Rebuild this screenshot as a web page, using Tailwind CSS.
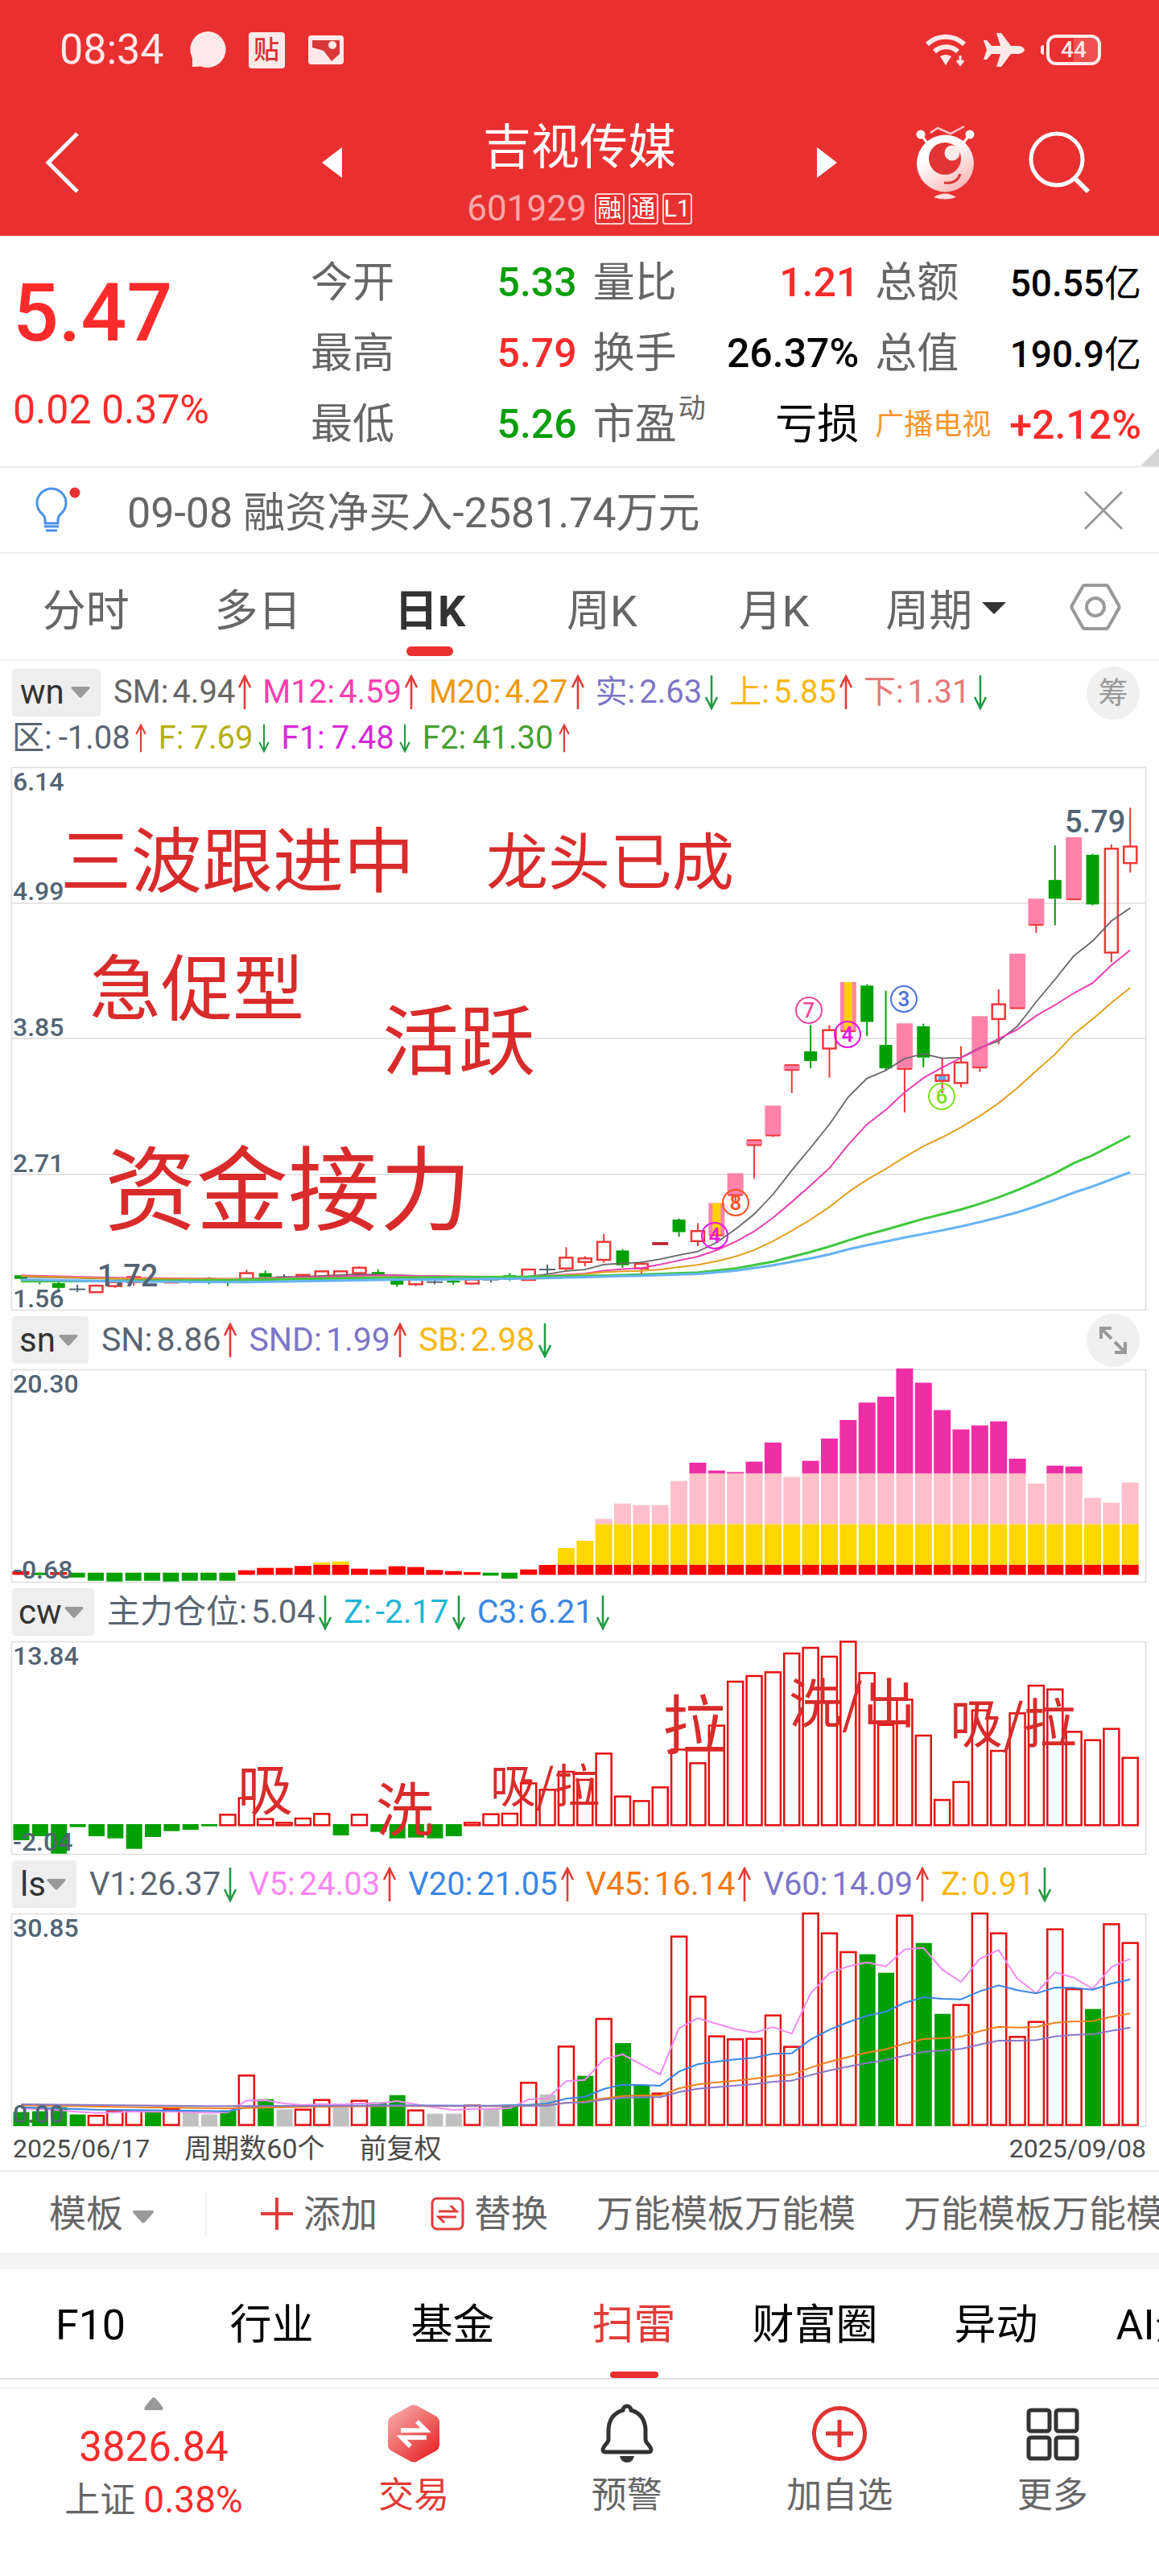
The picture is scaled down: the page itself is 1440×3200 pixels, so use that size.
<!DOCTYPE html>
<html lang="zh-CN">
  <head>
    <meta charset="UTF-8" />
    <meta name="viewport" content="width=device-width, initial-scale=1.0" />
    <title>吉视传媒 601929</title>
    <script src="https://cdn.jsdelivr.net/npm/@tailwindcss/browser@4"></script>
  </head>
  <body
    class="min-h-screen overflow-x-hidden bg-white font-['Roboto','Noto_Sans_CJK_SC',sans-serif] leading-none text-[#666]"
  >
    <!-- shared symbols -->
    <svg class="hidden">
      <symbol id="up" viewBox="0 0 18 44">
        <path d="M9 43V3M2 16L9 2l7 14" fill="none" stroke="#e23b38" stroke-width="2.6" />
      </symbol>
      <symbol id="down" viewBox="0 0 18 44">
        <path d="M9 1v40M2 28l7 14 7-14" fill="none" stroke="#239a45" stroke-width="2.6" />
      </symbol>
      <symbol id="caret" viewBox="0 0 28 18">
        <path d="M3 1h22q3 0 1.500 3L16 15.500q-2 2-4 0L1.500 4Q0 1 3 1z" fill="#999" />
      </symbol>
    </svg>

    <header class="bg-[#e93030] text-white">
      <div class="flex h-[124px] items-center justify-between pr-[72px] pl-[74px] text-[#fee9e9]">
        <div class="flex items-center">
          <span class="text-[52px]">08:34</span>
          <svg class="ml-8 h-[48px] w-[46px]" viewBox="0 0 46 48">
            <path d="M23 1a22.500 22.500 0 1 1-9 43.500L3 45V34A22.500 22.500 0 0 1 23 1z" fill="currentColor" />
          </svg>
          <span
            class="ml-[27px] flex h-[45px] w-[45px] items-center justify-center rounded-sm bg-[#fee9e9] text-[32px] font-medium text-[#d93030]"
            >贴</span
          >
          <svg class="ml-7 h-[36px] w-[46px]" viewBox="0 0 46 36">
            <rect x="1" width="44" height="36" rx="4" fill="currentColor" />
            <path d="M6 6h34v17L30 32 20 19 6 15z" fill="#d93838" />
            <circle cx="31" cy="12" r="5" fill="currentColor" />
          </svg>
        </div>
        <div class="flex items-center gap-5">
          <svg class="h-[42px] w-[52px]" viewBox="0 0 52 42" fill="none" stroke="currentColor" stroke-width="6">
            <path d="M3 14a33 33 0 0 1 46 0M12 23a21 21 0 0 1 29 0" />
            <path d="M19 29q7-4 14 0l-7 11z" fill="currentColor" stroke="none" />
            <path d="M44 28v11M40 34l4 5 4-5" stroke-width="3" />
          </svg>
          <svg class="h-[44px] w-[52px]" viewBox="0 0 52 44">
            <path
              d="M17 1h6l12 16h10q6 1 7 5-1 4-7 5H35L23 43h-6l5-16H11l-6 7H1l4-12L1 10h4l6 7h11z"
              fill="currentColor"
            />
          </svg>
          <span class="flex items-center gap-[3px]">
            <span class="h-3 w-1 rounded-l bg-[#fee9e9]"></span>
            <span
              class="flex h-[38px] w-[68px] items-center justify-center rounded-xl border-4 border-[#fee9e9] bg-linear-to-r from-[#e93030] from-50% to-[#f05050] to-50% text-[28px] font-medium"
              >44</span
            >
          </span>
        </div>
      </div>

      <div class="grid h-[169px] grid-cols-[1fr_auto_1fr]">
        <button class="ml-[54px] flex pt-[39px]" aria-label="返回">
          <svg class="h-[78px] w-[46px]" viewBox="0 0 46 78">
            <path d="M42 3L6 39l36 36" fill="none" stroke="#fff" stroke-width="5" />
          </svg>
        </button>
        <div class="flex w-[640px] justify-between">
          <button class="flex pt-[59px]" aria-label="上一只">
            <svg class="h-[38px] w-[26px]" viewBox="0 0 26 38"><path d="M25 0v38L0 19z" fill="#fff" /></svg>
          </button>
          <div class="flex flex-col items-center pt-[30px]">
            <h1 class="text-[60px]">吉视传媒</h1>
            <div class="mt-[23px] flex items-center gap-[5px] text-[30px]">
              <span class="mr-[5px] text-[44px] text-[#f7a8a8]">601929</span>
              <span class="flex h-[39px] w-[37px] items-center justify-center rounded border-2 border-[#fbd0d0]">融</span>
              <span class="flex h-[39px] w-[37px] items-center justify-center rounded border-2 border-[#fbd0d0]">通</span>
              <span class="flex h-[39px] w-[37px] items-center justify-center rounded border-2 border-[#fbd0d0]">L1</span>
            </div>
          </div>
          <button class="flex pt-[59px]" aria-label="下一只">
            <svg class="h-[38px] w-[26px]" viewBox="0 0 26 38"><path d="M1 0v38l25-19z" fill="#fff" /></svg>
          </button>
        </div>
        <div class="flex justify-end gap-14 pt-[28px] pr-[84px]">
          <button aria-label="助手" class="flex">
            <svg class="h-[100px] w-[90px]" viewBox="0 0 90 100">
              <defs>
                <linearGradient id="bot" x1="0" y1="0" x2=".6" y2="1">
                  <stop offset=".4" stop-color="#fff" />
                  <stop offset="1" stop-color="#fdbcbc" />
                </linearGradient>
              </defs>
              <path d="M15 16l8 11M74 16l-8 11" stroke="#fff" stroke-width="3" />
              <circle cx="14" cy="15" r="5.500" fill="#fff" />
              <circle cx="75" cy="15" r="5.500" fill="#fff" />
              <path d="M26 13l9-6 16 7 17-9" fill="none" stroke="#fbc4c4" stroke-width="2.500" />
              <circle cx="44.500" cy="51" r="35.500" fill="url(#bot)" />
              <circle cx="44" cy="45" r="20" fill="#e23434" />
              <circle cx="53" cy="38" r="9.500" fill="#fdeaea" />
              <path d="M63 64q-4 13-20 11" fill="none" stroke="#d93838" stroke-width="3" />
              <path d="M30 93q14-9 28 0-14 5-28 0z" fill="#fdd" />
            </svg>
          </button>
          <button aria-label="搜索" class="flex pt-[10px]">
            <svg class="h-[80px] w-[80px]" viewBox="0 0 80 80" fill="none" stroke="#fff" stroke-width="5">
              <circle cx="37" cy="36" r="32" />
              <path d="M59 59l17 17" stroke-width="6" />
            </svg>
          </button>
        </div>
      </div>
    </header>

    <section class="relative flex h-[288px] border-b-2 border-[#eee] pr-[22px]">
      <div class="w-[386px] shrink-0 pl-[16px] text-[#fb2b2b]">
        <p class="pt-[46px] text-[100px] font-medium">5.47</p>
        <p class="mt-[45px] text-[50px]">0.02 0.37%</p>
      </div>
      <div class="flex flex-1 gap-5 pt-[33px] text-[52px]">
        <dl class="flex-1 space-y-9">
          <div class="flex justify-between">
            <dt>今开</dt>
            <dd class="text-[50px] font-medium text-[#0a9e0a]">5.33</dd>
          </div>
          <div class="flex justify-between">
            <dt>最高</dt>
            <dd class="text-[50px] font-medium text-[#fb2b2b]">5.79</dd>
          </div>
          <div class="flex justify-between">
            <dt>最低</dt>
            <dd class="text-[50px] font-medium text-[#0a9e0a]">5.26</dd>
          </div>
        </dl>
        <dl class="flex-1 space-y-9">
          <div class="flex justify-between">
            <dt>量比</dt>
            <dd class="text-[50px] font-medium text-[#fb2b2b]">1.21</dd>
          </div>
          <div class="flex justify-between">
            <dt>换手</dt>
            <dd class="text-[50px] font-medium text-black">26.37%</dd>
          </div>
          <div class="flex justify-between">
            <dt class="flex items-start">市盈<span class="-mt-3 ml-0.5 text-[34px]">动</span></dt>
            <dd class="text-black">亏损</dd>
          </div>
        </dl>
        <dl class="flex-1 space-y-9">
          <div class="flex items-center justify-between">
            <dt>总额</dt>
            <dd class="text-[46px] font-medium text-black">50.55<span class="font-normal">亿</span></dd>
          </div>
          <div class="flex items-center justify-between">
            <dt>总值</dt>
            <dd class="text-[46px] font-medium text-black">190.9<span class="font-normal">亿</span></dd>
          </div>
          <div class="flex h-[52px] items-center justify-between">
            <dt class="text-[36px] text-[#f8952a]">广播电视</dt>
            <dd class="text-[50px] font-medium text-[#fb2b2b]">+2.12%</dd>
          </div>
        </dl>
      </div>
      <svg class="absolute right-0 bottom-0 h-[23px] w-[23px]" viewBox="0 0 23 23">
        <path d="M23 0v23H0z" fill="#d5d5d5" />
      </svg>
    </section>

    <section class="flex h-[107px] items-center border-b-2 border-[#eee] pr-[44px] pl-[42px]">
      <svg class="h-[60px] w-[62px]" viewBox="0 0 62 60">
        <path
          d="M14 42q0-4-3-7-7-6-7-14a18 18 0 0 1 36 0q0 8-7 14-3 3-3 7v4H14z"
          fill="none"
          stroke="#4a90ea"
          stroke-width="3"
        />
        <path d="M13 50h18M15 55h14" stroke="#4a90ea" stroke-width="3" />
        <circle cx="51" cy="8" r="6.500" fill="#e83030" />
      </svg>
      <p class="ml-[54px] flex-1 pt-2 text-[52px]">09-08 融资净买入-2581.74万元</p>
      <button aria-label="关闭">
        <svg class="h-[50px] w-[50px]" viewBox="0 0 50 50">
          <path d="M2 2l46 46M48 2L2 48" stroke="#999" stroke-width="3" />
        </svg>
      </button>
    </section>

    <nav class="flex h-[133px] border-b-2 border-[#eee] text-[54px]">
      <button class="flex-1 pt-3">分时</button>
      <button class="flex-1 pt-3">多日</button>
      <button class="relative flex-1 pt-3 font-bold text-[#333]">
        日K<span class="absolute bottom-1 left-1/2 h-3 w-[58px] -translate-x-1/2 rounded-full bg-[#e83030]"></span>
      </button>
      <button class="flex-1 pt-3">周K</button>
      <button class="flex-1 pt-3">月K</button>
      <button class="flex flex-1 items-center justify-center gap-[12px] pt-3">
        周期
        <svg class="mb-2 h-[15px] w-[30px]" viewBox="0 0 30 15"><path d="M0 0h30L15 15z" fill="#333" /></svg>
      </button>
      <button class="flex w-[158px] items-center justify-center" aria-label="设置">
        <svg class="h-[60px] w-[66px]" viewBox="0 0 66 60" fill="none" stroke="#999" stroke-width="4">
          <path d="M20 3h26q2 0 3 2l13 23q1 2 0 4L49 55q-1 2-3 2H20q-2 0-3-2L4 32q-1-2 0-4L17 5q1-2 3-2z" />
          <circle cx="33" cy="30" r="11" />
        </svg>
      </button>
    </nav>

    <main>
      <div class="flex h-[132px] justify-between pt-[7px] pr-6 pl-[15px] text-[40px]">
        <div>
          <div class="flex h-[64px] items-center">
            <label class="relative mr-4 flex items-center">
              <select aria-label="主图指标" class="h-[59px] w-[110px] appearance-none rounded bg-[#eee] pl-[10px] text-[42px] text-[#333]">
                <option>wn</option>
              </select>
              <svg class="pointer-events-none absolute right-3 h-4 w-[26px]"><use href="#caret" /></svg>
            </label>
            <ul class="flex items-center gap-[13px] whitespace-nowrap">
              <li class="flex items-center text-[#666]"><span class="mr-[5px]">SM:</span>4.94<svg class="ml-[3px] h-[44px] w-[18px]"><use href="#up" /></svg></li>
              <li class="flex items-center text-[#fb3dae]"><span class="mr-[5px]">M12:</span>4.59<svg class="ml-[3px] h-[44px] w-[18px]"><use href="#up" /></svg></li>
              <li class="flex items-center text-[#ee9a10]"><span class="mr-[5px]">M20:</span>4.27<svg class="ml-[3px] h-[44px] w-[18px]"><use href="#up" /></svg></li>
              <li class="flex items-center text-[#7d75c8]"><span class="mr-[5px]">实:</span>2.63<svg class="ml-[3px] h-[44px] w-[18px]"><use href="#down" /></svg></li>
              <li class="flex items-center text-[#f7b80f]"><span class="mr-[5px]">上:</span>5.85<svg class="ml-[3px] h-[44px] w-[18px]"><use href="#up" /></svg></li>
              <li class="flex items-center text-[#e87878]"><span class="mr-[5px]">下:</span>1.31<svg class="ml-[3px] h-[44px] w-[18px]"><use href="#down" /></svg></li>
            </ul>
          </div>
          <ul class="mt-[5px] flex items-center gap-[13px] whitespace-nowrap">
            <li class="flex items-center text-[#5a6472]"><span class="mr-2">区:</span>-1.08<svg class="ml-1 h-[36px] w-[18px]"><use href="#up" /></svg></li>
            <li class="flex items-center text-[#b5b015]"><span class="mr-2">F:</span>7.69<svg class="ml-1 h-[36px] w-[18px]"><use href="#down" /></svg></li>
            <li class="flex items-center text-[#d62ad8]"><span class="mr-2">F1:</span>7.48<svg class="ml-1 h-[36px] w-[18px]"><use href="#down" /></svg></li>
            <li class="flex items-center text-[#46a030]"><span class="mr-2">F2:</span>41.30<svg class="ml-1 h-[36px] w-[18px]"><use href="#up" /></svg></li>
          </ul>
        </div>
        <button class="h-[66px] w-[66px] rounded-full bg-[#f0f0f0] text-[37px] text-[#999]">筹</button>
      </div>
      <svg id="kline" class="block w-full overflow-visible" viewBox="0 0 1440 675"></svg>

      <div class="flex h-[73px] items-center justify-between pr-6 pl-[15px] text-[41px]">
        <div class="flex items-center">
          <label class="relative mr-4 flex items-center">
            <select aria-label="副图指标一" class="h-[59px] w-[95px] appearance-none rounded bg-[#eee] pl-[9px] text-[42px] text-[#333]">
              <option>sn</option>
            </select>
            <svg class="pointer-events-none absolute right-3 h-4 w-[26px]"><use href="#caret" /></svg>
          </label>
          <ul class="flex items-center gap-[14px] whitespace-nowrap">
            <li class="flex items-center text-[#5a6472]"><span class="mr-[5px]">SN:</span>8.86<svg class="ml-[3px] h-[44px] w-[18px]"><use href="#up" /></svg></li>
            <li class="flex items-center text-[#7d75c8]"><span class="mr-[5px]">SND:</span>1.99<svg class="ml-[3px] h-[44px] w-[18px]"><use href="#up" /></svg></li>
            <li class="flex items-center text-[#f7b80f]"><span class="mr-[5px]">SB:</span>2.98<svg class="ml-[3px] h-[44px] w-[18px]"><use href="#down" /></svg></li>
          </ul>
        </div>
        <button class="flex h-[66px] w-[66px] items-center justify-center rounded-full bg-[#f0f0f0]" aria-label="展开">
          <svg class="h-[34px] w-[34px]" viewBox="0 0 34 34">
            <path d="M2 15V2h13M2 2l13 13M32 19v13H19M32 32L19 19" fill="none" stroke="#999" stroke-width="4" />
          </svg>
        </button>
      </div>
      <svg id="sn" class="block w-full overflow-visible" viewBox="0 0 1440 265"></svg>

      <div class="flex h-[73px] items-center pl-[15px] text-[41px]">
        <label class="relative mr-4 flex items-center">
          <select aria-label="副图指标二" class="h-[59px] w-[102px] appearance-none rounded bg-[#eee] pl-2 text-[42px] text-[#333]">
            <option>cw</option>
          </select>
          <svg class="pointer-events-none absolute right-3 h-4 w-[26px]"><use href="#caret" /></svg>
        </label>
        <ul class="flex items-center gap-[14px] whitespace-nowrap">
          <li class="flex items-center text-[#5a6472]"><span class="mr-[5px]">主力仓位:</span>5.04<svg class="ml-[3px] h-[44px] w-[18px]"><use href="#down" /></svg></li>
          <li class="flex items-center text-[#1db8d4]"><span class="mr-[5px]">Z:</span>-2.17<svg class="ml-[3px] h-[44px] w-[18px]"><use href="#down" /></svg></li>
          <li class="flex items-center text-[#3a86e4]"><span class="mr-[5px]">C3:</span>6.21<svg class="ml-[3px] h-[44px] w-[18px]"><use href="#down" /></svg></li>
        </ul>
      </div>
      <svg id="cw" class="block w-full overflow-visible" viewBox="0 0 1440 265"></svg>

      <div class="flex h-[73px] items-center pl-[15px] text-[40px]">
        <label class="relative mr-4 flex items-center">
          <select aria-label="副图指标三" class="h-[59px] w-[80px] appearance-none rounded bg-[#eee] pl-[10px] text-[42px] text-[#333]">
            <option>ls</option>
          </select>
          <svg class="pointer-events-none absolute right-3 h-4 w-[26px]"><use href="#caret" /></svg>
        </label>
        <ul class="flex items-center gap-[14px] whitespace-nowrap">
          <li class="flex items-center text-[#5a6472]"><span class="mr-[5px]">V1:</span>26.37<svg class="ml-[3px] h-[44px] w-[18px]"><use href="#down" /></svg></li>
          <li class="flex items-center text-[#fa86f2]"><span class="mr-[5px]">V5:</span>24.03<svg class="ml-[3px] h-[44px] w-[18px]"><use href="#up" /></svg></li>
          <li class="flex items-center text-[#3a86e4]"><span class="mr-[5px]">V20:</span>21.05<svg class="ml-[3px] h-[44px] w-[18px]"><use href="#up" /></svg></li>
          <li class="flex items-center text-[#f4780f]"><span class="mr-[5px]">V45:</span>16.14<svg class="ml-[3px] h-[44px] w-[18px]"><use href="#up" /></svg></li>
          <li class="flex items-center text-[#7d75c8]"><span class="mr-[5px]">V60:</span>14.09<svg class="ml-[3px] h-[44px] w-[18px]"><use href="#up" /></svg></li>
          <li class="flex items-center text-[#f7b80f]"><span class="mr-[5px]">Z:</span>0.91<svg class="ml-[3px] h-[44px] w-[18px]"><use href="#down" /></svg></li>
        </ul>
      </div>
      <svg id="ls" class="block w-full overflow-visible" viewBox="0 0 1440 265"></svg>

      <div class="flex h-[56px] items-center border-b-2 border-[#eee] px-[16px] text-[34px] text-[#4a4a4a]">
        <time class="text-[32px]">2025/06/17</time>
        <span class="ml-[43px]">周期数60个</span>
        <span class="ml-[43px] flex-1">前复权</span>
        <time class="text-[32px]">2025/09/08</time>
      </div>
    </main>

    <div class="flex h-[101px] items-center overflow-hidden pt-0.5 text-[46px] whitespace-nowrap">
      <label class="relative flex w-[197px] shrink-0 items-center pl-[61px]">
        <select aria-label="模板" class="w-[136px] appearance-none">
          <option>模板</option>
        </select>
        <svg class="pointer-events-none absolute right-[5px] h-[18px] w-[28px] translate-y-1"><use href="#caret" /></svg>
      </label>
      <span class="ml-[58px] h-[52px] w-[2px] shrink-0 bg-[#f0f0f0]"></span>
      <button class="ml-[66px] flex items-center gap-3">
        <svg class="h-[42px] w-[42px]" viewBox="0 0 42 42"><path d="M21 1v40M1 21h40" stroke="#e23b3b" stroke-width="4" /></svg>
        添加
      </button>
      <button class="ml-[66px] flex items-center gap-3">
        <svg class="h-[42px] w-[42px]" viewBox="0 0 42 42" fill="none" stroke="#e23b3b" stroke-width="3">
          <rect x="2" y="2" width="38" height="38" rx="6" />
          <path d="M10 18h22l-7-7M32 25H10l7 7" />
        </svg>
        替换
      </button>
      <button class="ml-[60px]">万能模板万能模</button>
      <button class="ml-[60px]">万能模板万能模</button>
    </div>
    <div class="h-[20px] border-t-2 border-[#eee] bg-[#f4f4f4]"></div>

    <nav class="flex h-[137px] overflow-hidden border-b-2 border-[#e0e0e0] text-[52px] whitespace-nowrap text-black">
      <a href="#" class="flex w-[225px] shrink-0 items-center justify-center pt-1">F10</a>
      <a href="#" class="flex w-[225px] shrink-0 items-center justify-center pt-1">行业</a>
      <a href="#" class="flex w-[225px] shrink-0 items-center justify-center pt-1">基金</a>
      <a href="#" class="relative flex w-[225px] shrink-0 items-center justify-center pt-1 text-[#e23b38]">
        扫雷<span class="absolute bottom-0 h-2 w-[60px] rounded-full bg-[#e83030]"></span>
      </a>
      <a href="#" class="flex w-[225px] shrink-0 items-center justify-center pt-1">财富圈</a>
      <a href="#" class="flex w-[225px] shrink-0 items-center justify-center pt-1">异动</a>
      <a href="#" class="flex w-[225px] shrink-0 items-center justify-center pt-1">AI分析</a>
    </nav>

    <footer class="mt-[9px] flex border-t-3 border-[#f2f2f2] text-center text-[44px]">
      <a href="#" class="flex w-[382px] flex-col items-center text-[#fb2b2b]">
        <svg class="mt-[10px] h-4 w-[26px]" viewBox="0 0 26 16"><path d="M13 0q2 0 11 12 2 4-2 4H4q-4 0-2-4Q11 0 13 0z" fill="#999" /></svg>
        <span class="mt-[20px] text-[51px]">3826.84</span>
        <span class="mt-[17px] text-[46px]"><span class="mr-[10px] text-[44px] text-[#666]">上证</span>0.38%</span>
      </a>
      <a href="#" class="flex flex-1 flex-col items-center text-[#e23b38]">
        <svg class="mt-[18px] h-[74px] w-[74px]" viewBox="0 0 74 74">
          <defs>
            <linearGradient id="hex" x1="0" y1="0" x2=".8" y2="1">
              <stop offset="0" stop-color="#f9b6b6" />
              <stop offset="1" stop-color="#e62424" />
            </linearGradient>
          </defs>
          <path d="M32 3q5-3 10 0l22 12q5 3 5 8v28q0 5-5 8L42 71q-5 3-10 0L10 59q-5-3-5-8V23q0-5 5-8z" fill="url(#hex)" />
          <path d="M21 33h31L41 22M53 42H22l11 11" fill="none" stroke="#fff" stroke-width="5.500" />
        </svg>
        <span class="mt-[18px]">交易</span>
      </a>
      <a href="#" class="flex flex-1 flex-col items-center">
        <svg class="mt-[18px] h-[74px] w-[74px]" viewBox="0 0 74 74">
          <path
            d="M32 8a5 5 0 0 1 10 0q17 5 18 24v12q0 3 3 6 4 5 4 7 0 3-4 3H11q-4 0-4-3 0-2 4-7 3-3 3-6V32Q15 13 32 8z"
            fill="none"
            stroke="#333"
            stroke-width="5"
          />
          <path d="M28 65h18q-2 8-9 8t-9-8z" fill="#333" />
        </svg>
        <span class="mt-[18px]">预警</span>
      </a>
      <a href="#" class="flex flex-1 flex-col items-center">
        <svg class="mt-[18px] h-[74px] w-[74px]" viewBox="0 0 74 74" fill="none" stroke="#e23232" stroke-width="5">
          <circle cx="37" cy="37" r="31.500" />
          <path d="M37 20v34M20 37h34" />
        </svg>
        <span class="mt-[18px]">加自选</span>
      </a>
      <a href="#" class="flex flex-1 flex-col items-center">
        <svg class="mt-[18px] h-[74px] w-[74px]" viewBox="0 0 74 74" fill="none" stroke="#333" stroke-width="5">
          <rect x="7" y="8" width="26" height="26" rx="3" />
          <rect x="41" y="8" width="26" height="26" rx="3" />
          <rect x="7" y="42" width="26" height="26" rx="3" />
          <rect x="41" y="42" width="26" height="26" rx="3" />
        </svg>
        <span class="mt-[18px]">更多</span>
      </a>
    </footer>

    <script type="text/javascript">
      const NS = "http://www.w3.org/2000/svg";
      const GREEN = "#00a000";
      const GRAY = "#c0c0c0";

      // x centre of the i-th of 60 periods
      const cx = (i) => 26 + 23.36 * i;

      const el = (svg, tag, attrs, text) => {
        const node = document.createElementNS(NS, tag);
        for (const key in attrs) node.setAttribute(key, attrs[key]);
        if (text !== undefined) node.textContent = text;
        svg.appendChild(node);
        return node;
      };

      const line = (svg, x1, y1, x2, y2, stroke, width = 2) =>
        el(svg, "line", { x1, y1, x2, y2, stroke, "stroke-width": width });

      const rect = (svg, x, y, width, height, fill) =>
        el(svg, "rect", { x, y, width, height: Math.max(height, 1), fill });

      const hollow = (svg, x, y, width, height, stroke = "#e60f0f") =>
        el(svg, "rect", { x, y, width, height: Math.max(height, 2), fill: "none", stroke, "stroke-width": 2.5 });

      const frame = (svg, height) =>
        el(svg, "rect", { x: 14.5, y: 0.5, width: 1409, height: height - 1, fill: "none", stroke: "#dedede", "stroke-width": 1.5 });

      const axis = (svg, y, text) =>
        el(svg, "text", { x: 16, y, "font-size": 32, "font-weight": 500, fill: "#526474" }, text);

      const note = (svg, x, y, size, text) =>
        el(svg, "text", { x, y: y + size * 0.38, "font-size": size, fill: "#d92b2b", "font-family": "Noto Sans CJK SC, sans-serif" }, text);

      const curve = (svg, points, y, stroke, width) =>
        el(svg, "polyline", {
          points: points.map(([i, v]) => `${cx(i)},${y(v)}`).join(" "),
          fill: "none",
          stroke,
          "stroke-width": width,
        });

      // values for consecutive periods starting at `start`
      const run = (start, values) => values.map((v, k) => [start + k, v]);

      // ---- candles ----
      const kline = document.getElementById("kline");
      {
        const y = (v) => v / 2.24 - 13;
        frame(kline, 675);
        [169, 337, 506].forEach((g) => line(kline, 14, g, 1424, g, "#dedede", 1.5));

        // [kind, top, bottom, high, low]
        const candles = [
          ["g", 1443, 1453, 1443, 1455], ["g", 1457, 1461, 1453, 1468], ["g", 1465, 1478, 1460, 1485],
          ["x", 1482, 1482, 1470, 1490], ["r", 1472, 1490, 1472, 1490], ["r", 1462, 1473, 1460, 1478],
          ["r", 1448, 1462, 1448, 1472], ["x", 1456, 1456, 1450, 1460], ["r", 1458, 1463, 1456, 1464],
          ["x", 1458, 1458, 1454, 1466], ["g", 1450, 1457, 1448, 1468], ["g", 1457, 1462, 1452, 1473],
          ["r", 1437, 1455, 1428, 1462], ["g", 1437, 1448, 1430, 1455], ["x", 1448, 1448, 1440, 1455],
          ["r", 1442, 1450, 1440, 1452], ["r", 1432, 1448, 1430, 1450], ["r", 1432, 1448, 1430, 1450],
          ["r", 1422, 1437, 1418, 1440], ["g", 1434, 1440, 1427, 1445], ["g", 1458, 1469, 1455, 1475],
          ["r", 1452, 1468, 1452, 1473], ["x", 1462, 1462, 1456, 1468], ["g", 1458, 1463, 1455, 1469],
          ["r", 1455, 1466, 1453, 1467], ["x", 1455, 1455, 1448, 1463], ["g", 1443, 1448, 1437, 1458],
          ["r", 1427, 1456, 1427, 1456], ["x", 1427, 1427, 1413, 1440], ["r", 1394, 1424, 1365, 1432],
          ["r", 1396, 1406, 1390, 1418], ["r", 1350, 1400, 1328, 1408], ["g", 1374, 1415, 1370, 1422],
          ["r", 1411, 1424, 1405, 1438], ["d", 1351, 1359, 1351, 1359], ["g", 1288, 1323, 1285, 1336],
          ["r", 1320, 1348, 1298, 1362], ["y", 1242, 1332, 1242, 1332], ["p", 1159, 1220, 1159, 1240],
          ["p", 1067, 1081, 1065, 1174], ["p", 971, 1054, 971, 1058], ["p", 858, 872, 856, 936],
          ["g", 820, 847, 747, 867], ["r", 761, 812, 747, 893], ["y", 627, 764, 627, 764],
          ["g", 637, 738, 633, 777], ["g", 802, 867, 651, 872], ["p", 742, 869, 742, 990],
          ["g", 750, 837, 743, 864], ["b", 886, 902, 838, 936], ["r", 851, 908, 806, 920],
          ["p", 722, 865, 722, 877], ["r", 689, 730, 647, 801], ["p", 548, 700, 548, 701],
          ["p", 395, 468, 395, 490], ["g", 343, 395, 247, 469], ["p", 224, 397, 224, 398],
          ["g", 273, 411, 270, 414], ["r", 256, 545, 244, 572], ["r", 250, 296, 142, 322],
        ];
        const RISE = "#ee3838";
        candles.forEach(([kind, top, bottom, high, low], i) => {
          const x = cx(i);
          const t = y(top);
          const h = y(bottom) - t;
          const wick = kind === "g" ? GREEN : kind === "x" ? "#526474" : RISE;
          if (high < top) line(kline, x, y(high), x, t, wick);
          if (low > bottom) line(kline, x, y(bottom), x, y(low), wick);
          if (kind === "g") rect(kline, x - 8, t, 16, Math.max(h, 2), GREEN);
          if (kind === "r") hollow(kline, x - 8, t, 16, h, RISE);
          if (kind === "x") line(kline, x - 10, t, x + 10, t, wick);
          if (kind === "d") rect(kline, x - 10, t, 20, h, "#c01c28");
          if (kind === "b") {
            rect(kline, x - 5, t, 10, h, "#62a8e8");
            hollow(kline, x - 8, t, 16, h, RISE);
          }
          if (kind === "p" || kind === "y") {
            rect(kline, x - 10, t, 20, h, "#fe82aa");
            if (kind === "y") rect(kline, x - 5, t, 10, h, "#ffd000");
            line(kline, x - 9, t + h, x + 9, t + h, RISE);
            if (h < 10) line(kline, x - 9, t, x + 9, t, RISE);
          }
        });

        curve(kline, [[0, 1447], [5, 1453], [10, 1456], [15, 1447], [18, 1440], [20, 1443], [25, 1449], [27, 1446], ...run(28, [
          1440, 1431, 1427, 1413, 1410, 1407, 1398, 1387, 1377, 1352, 1315, 1273, 1218, 1151, 1088, 1023,
          947, 895, 873, 840, 827, 839, 837, 810, 791, 750, 682, 620, 554, 513, 457, 421])], y, "#666", 1.8);
        curve(kline, [[0, 1443], [5, 1450], [12, 1453], [19, 1443], [27, 1448], ...run(29, [
          1441, 1438, 1430, 1426, 1423, 1413, 1402, 1391, 1373, 1350, 1321, 1283, 1239, 1193, 1145,
          1080, 1023, 983, 934, 894, 865, 838, 812, 785, 759, 721, 691, 658, 630, 580, 538])], y, "#ee3fb0", 2);
        curve(kline, [[0, 1445], [5, 1452], [12, 1454], [19, 1448], [27, 1448], ...run(30, [
          1440, 1434, 1432, 1431, 1427, 1420, 1414, 1404, 1391, 1373, 1348, 1319, 1288, 1253, 1212,
          1177, 1147, 1114, 1084, 1059, 1031, 1000, 964, 922, 874, 828, 772, 730, 685, 643])], y, "#e3a020", 2);
        curve(kline, [[0, 1460], [5, 1459], [12, 1456], [19, 1450], [27, 1447], [30, 1445], [33, 1441], [36, 1435], [38, 1424], [40, 1405], [42, 1378], ...run(43, [
          1363, 1346, 1330, 1316, 1301, 1286, 1273, 1260, 1244, 1226, 1206, 1183, 1159, 1131, 1109, 1082, 1055])], y, "#3fc83f", 3);
        curve(kline, [[0, 1455], [5, 1460], [12, 1462], [19, 1456], [27, 1452], [30, 1448], [33, 1444], [36, 1439], [38, 1430], [40, 1415], [42, 1396], ...run(43, [
          1385, 1371, 1359, 1349, 1338, 1328, 1318, 1307, 1295, 1282, 1268, 1251, 1233, 1213, 1196, 1176, 1156])], y, "#66b2f5", 3);

        // numbered markers
        [
          [1005, 302, "7", "#ee4a9c"], [1053, 332, "4", "#e814e8"], [1123, 288, "3", "#4a70dc"],
          [1170, 409, "6", "#7fe020"], [888, 582, "4", "#e814e8"], [914, 541, "8", "#fb501e"],
        ].forEach(([x, my, n, color]) => {
          el(kline, "circle", { cx: x, cy: my, r: 16, fill: "none", stroke: color, "stroke-width": 2 });
          el(kline, "text", { x, y: my + 9, "font-size": 26, "font-weight": 500, "text-anchor": "middle", fill: color }, n);
        });

        axis(kline, 29, "6.14");
        axis(kline, 165, "4.99");
        axis(kline, 334, "3.85");
        axis(kline, 503, "2.71");
        axis(kline, 671, "1.56");
        el(kline, "text", { x: 121, y: 645, "font-size": 38, "font-weight": 500, fill: "#526474" }, "1.72");
        el(kline, "text", { x: 1323, y: 81, "font-size": 38, "font-weight": 500, fill: "#526474" }, "5.79");
        note(kline, 75, 115, 88, "三波跟进中");
        note(kline, 604, 117, 77, "龙头已成");
        note(kline, 111, 273, 89, "急促型");
        note(kline, 475, 339, 95, "活跃");
        note(kline, 130, 523, 114, "资金接力");
      }

      // ---- stacked strength bars ----
      const sn = document.getElementById("sn");
      {
        const y = (v) => (v - 214) / 3;
        frame(sn, 265);
        const tops = [
          966, -981, 970, -990, -1002, -1005, -1002, -1002, -1005, -1002, -1001, -1002, 963, 954, 954,
          947, 934, 930, 957, 960, 948, 951, 962, 966, 970, -983, -994, 960, 943, 880,
          853, 771, 714, 720, 720, 630, 562, 591, 597, 558, 487, 615, 555, 472, 403,
          338, 316, 211, 264, 366, 438, 423, 408, 547, 640, 573, 576, 693, 711, 636,
        ];
        const layers = [[980, "#ff0000"], [942, "#ffd700"], [791, "#ffc0cb"], [602, "#ee2ea5"]];
        tops.forEach((v, i) => {
          const x = cx(i) - 10.5;
          if (v < 0) {
            rect(sn, x, y(972), 20, y(-v) - y(972), GREEN);
            return;
          }
          layers.forEach(([base, color], k) => {
            const cap = k < 3 ? layers[k + 1][0] : 0;
            const top = Math.max(v, cap);
            if (top < base) rect(sn, x, y(top), 21, y(base) - y(top), color);
          });
        });
        axis(sn, 29, "20.30");
        axis(sn, 260, "-0.68");
      }

      // ---- position bars ----
      const cw = document.getElementById("cw");
      {
        const y = (v) => (v - 207) / 3;
        frame(cw, 265);
        [
          -948, -933, -998, -899, -933, -941, -980, -936, -914, -909, -896, 850, 788, 866, 880,
          864, 847, -930, 850, -917, -941, -938, -941, -933, 880, 848, 846, 733, 757, 690,
          720, 622, 782, 799, 748, 607, 658, 518, 354, 333, 319, 249, 228, 261, 205,
          322, 515, 421, 555, 795, 728, 461, 612, 472, 369, 383, 541, 572, 530, 638,
        ].forEach((v, i) => {
          const x = cx(i) - 9.5;
          if (v < 0) rect(cw, x, y(888), 20, y(-v) - y(888), GREEN);
          else hollow(cw, x, y(v) + 1, 19, y(892) - y(v) - 1);
        });
        axis(cw, 29, "13.84");
        axis(cw, 260, "-2.04");
        note(cw, 295, 184, 69, "吸");
        note(cw, 467, 208, 72, "洗");
        note(cw, 609, 178, 57, "吸/拉");
        note(cw, 823, 103, 80, "拉");
        note(cw, 980, 76, 66, "洗/出");
        note(cw, 1180, 101, 66, "吸/拉");
      }

      // ---- turnover bars ----
      const ls = document.getElementById("ls");
      {
        const y = (v) => (v - 199) / 3;
        frame(ls, 265);
        const tops = [
          939, 936, 921, 948, 953, 935, 935, 938, 927, 940, 948, 933, 803, 891, 929,
          930, 894, 922, 897, 903, 876, 933, 945, 945, 915, 927, 912, 830, 873, 695,
          804, 592, 682, 838, 870, 285, 509, 657, 668, 666, 579, 696, 199, 273, 343,
          351, 420, 207, 309, 573, 540, 199, 273, 659, 603, 258, 481, 555, 239, 309,
        ];
        const kinds = "ggggrrrgrnngrgnrrnrggrnnrngrnrgrggrrrrrrrrrrrggrggrrrrrrrgrr";
        tops.forEach((v, i) => {
          const x = cx(i) - 9.5;
          if (kinds[i] === "r") hollow(ls, x, y(v), 19, y(987) - y(v));
          else rect(ls, x, y(v), 20, y(991) - y(v), kinds[i] === "g" ? GREEN : GRAY);
        });
        curve(ls, run(0, [
          925, 928, 932, 938, 942, 940, 937, 938, 937, 939, 942, 940, 896, 895, 907,
          913, 909, 911, 907, 907, 898, 910, 922, 931, 927, 927, 924, 892, 888, 824,
          819, 743, 724, 762, 799, 627, 589, 610, 630, 643, 622, 647, 497, 422, 396,
          381, 396, 333, 327, 408, 454, 368, 335, 442, 496, 418, 438, 480, 399, 368]), y, "#f28cf0", 2);
        curve(ls, [[0, 921], [4, 930], [8, 933], [11, 936], [12, 922], [13, 918], [20, 914], [25, 915], ...run(27, [
          912, 907, 889, 882, 853, 837, 838, 841, 788, 761, 751, 743, 737, 722, 720, 669, 632,
          604, 580, 565, 532, 511, 517, 519, 489, 467, 485, 497, 475, 476, 483, 460, 445])], y, "#3a86e4", 2);
        curve(ls, [[0, 914], [5, 920], [11, 925], [15, 920], [20, 917], [26, 917], ...run(28, [
          914, 905, 900, 888, 879, 877, 877, 851, 836, 828, 822, 815, 804, 800, 773, 752, 734,
          717, 705, 684, 667, 664, 658, 638, 621, 624, 622, 606, 601, 600, 584, 572])], y, "#f08020", 2);
        curve(ls, [[0, 910], [10, 917], [20, 915], [26, 917], ...run(28, [
          915, 905, 903, 893, 886, 884, 884, 864, 852, 846, 840, 835, 826, 822, 801, 784, 770,
          756, 745, 729, 714, 710, 704, 687, 673, 673, 671, 657, 651, 649, 636, 624])], y, "#8a78c8", 2);
        axis(ls, 29, "30.85");
        axis(ls, 260, "0.00");
      }
    </script>
  </body>
</html>
